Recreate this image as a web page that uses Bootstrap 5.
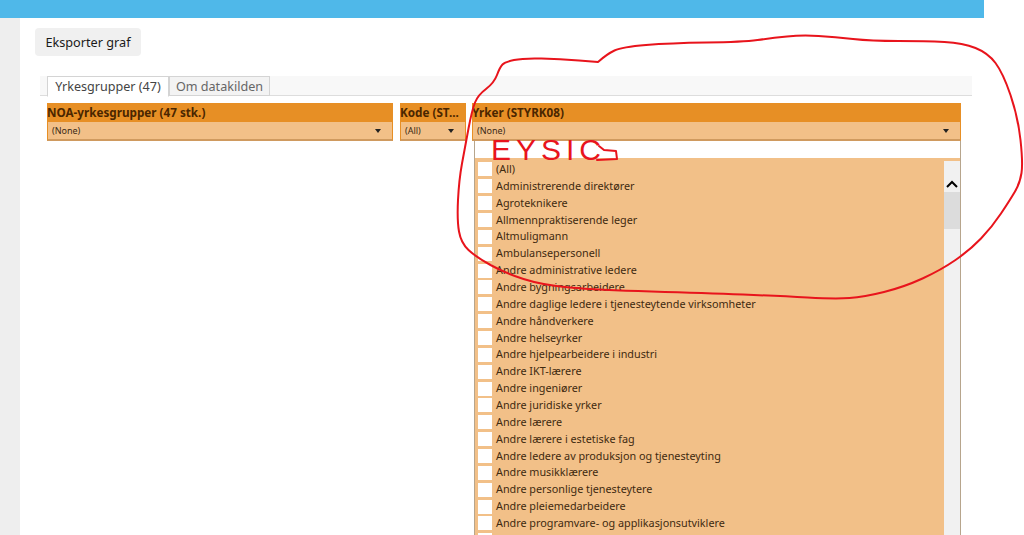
<!DOCTYPE html>
<html lang="en">
<head>
    <meta charset="UTF-8">
    <meta name="viewport" content="width=device-width, initial-scale=1.0">
    <title>Yrkesgrupper</title>
    <link href="https://cdn.jsdelivr.net/npm/bootstrap@5.3.0/dist/css/bootstrap.min.css" rel="stylesheet">
    <style>
        html, body { height: 535px; overflow: hidden; }
        body { font-family: "Noto Sans", "Open Sans", sans-serif; background: #fff; color: #222; position: relative; }
        .top-strip { height: 18px; width: 984px; background: #4fb8e9; }
        .side-band { width: 20px; background: #eee; flex: none; }
        .page-body { height: 517px; }
        .page-main { padding: 10px 0 0 15px; min-width: 0; }
        .export-btn { width: 106px; height: 28px; padding: 0; background: #f0f0f0; border: 0; border-radius: 4px; font-size: 12.7px; line-height: 28px; color: #1a1a1a; }
        .export-btn:hover { background: #e6e6e6; }
        .tab-strip { width: 932px; height: 20px; margin: 20px 0 0 5px; padding-left: 7px; background: #f8f8f8; border-bottom: 1px solid #ddd; flex-wrap: nowrap; }
        .tab-strip .nav-link { height: 20px; padding: 0; font-size: 12.6px; line-height: 19px; color: #666; background: #f3f3f3; border: 1px solid #d4d4d4; border-radius: 0; margin: 0; white-space: nowrap; }
        .tab-strip .nav-link.active { height: 21px; color: #444; background: #fff; border-color: #d4d4d4 #d4d4d4 #fff; }
        .tab-first { width: 122px; }
        .tab-second { width: 101px; margin-left: 0; }
        .slicer-row { margin: 7px 0 0 12px; }
        .slicer-one { width: 346px; margin-right: 7px; }
        .slicer-two { width: 66px; margin-right: 6px; }
        .slicer-three { width: 489px; }
        .slicer-head { height: 19px; background: #e78f25; font-size: 11.7px; line-height: 19px; font-weight: 700; color: #4a2600; white-space: nowrap; overflow: hidden; }
        .slicer-pick { height: 19px; background: #f2c088; border: 1px solid #e78f25; border-top: 0; border-bottom: 2px solid #cf9a5f; padding: 0 11px 0 4px; font-size: 9px; color: #3a2a15; }
        .slicer-pick i { width: 0; height: 0; border-left: 3px solid transparent; border-right: 3px solid transparent; border-top: 4px solid #222; }
        .pick-list { margin-left: 2px; width: 487px; height: 395px; border: 1px solid #b7a58c; border-top: 0; border-bottom: 0; overflow: hidden; }
        .pick-search { height: 17px; background: #fff; }
        .pick-body { height: 378px; background: #f2c088; padding-top: 3px; }
        .pick-rows { min-width: 0; padding-left: 3px; }
        .pick-row { height: 16.86px; font-size: 10.8px; line-height: 16.86px; color: #3f2a10; white-space: nowrap; }
        .pick-box { width: 14px; height: 14px; background: #fff; flex: none; margin-right: 4px; }
        .scroll-track { width: 16px; background: #f1f1f1; flex: none; }
        .scroll-up { height: 31px; }
        .scroll-thumb { height: 37px; background: #dcdcdc; }
        .ink-layer { position: absolute; left: 0; top: 0; pointer-events: none; }
        .ink-word { position: absolute; left: 491px; top: 140px; font-family: "Liberation Sans", sans-serif; font-size: 30px; line-height: 19px; letter-spacing: 5px; color: #e8141c; pointer-events: none; }
    </style>
</head>
<body>
    <div class="top-strip"></div>
    <div class="d-flex page-body">
        <div class="side-band"></div>
        <div class="page-main flex-grow-1">
            <button class="btn export-btn d-block" type="button">Eksporter graf</button>

            <ul class="nav tab-strip">
                <li class="nav-item"><a class="nav-link active tab-first text-center" href="#">Yrkesgrupper (47)</a></li>
                <li class="nav-item"><a class="nav-link tab-second text-center" href="#">Om datakilden</a></li>
            </ul>

            <div class="d-flex align-items-start slicer-row">
                <div class="slicer-one">
                    <div class="slicer-head">NOA-yrkesgrupper (47 stk.)</div>
                    <div class="slicer-pick d-flex align-items-center justify-content-between"><span>(None)</span><i></i></div>
                </div>
                <div class="slicer-two">
                    <div class="slicer-head">Kode (ST...</div>
                    <div class="slicer-pick d-flex align-items-center justify-content-between"><span>(All)</span><i></i></div>
                </div>
                <div class="slicer-three">
                    <div class="slicer-head">Yrker (STYRK08)</div>
                    <div class="slicer-pick d-flex align-items-center justify-content-between"><span>(None)</span><i></i></div>
                    <div class="pick-list">
                        <div class="pick-search"></div>
                        <div class="pick-body d-flex">
                            <div class="pick-rows flex-grow-1" id="pick-rows"></div>
                            <div class="scroll-track">
                                <div class="scroll-up d-flex justify-content-center align-items-end pb-1">
                                    <svg width="12" height="8" viewBox="0 0 12 8"><path d="M1 7L6 2l5 5" fill="none" stroke="#000" stroke-width="2"/></svg>
                                </div>
                                <div class="scroll-thumb"></div>
                            </div>
                        </div>
                    </div>
                </div>
            </div>
        </div>
    </div>

    <div class="ink-word">EYSIC</div>
    <svg class="ink-layer" width="1024" height="535" viewBox="0 0 1024 535" fill="none" stroke="#e8141c" stroke-width="2" stroke-linejoin="round" stroke-linecap="round">
        <path id="ink-loop"/>
        <path d="M599 146l5 4 12 1 1 8-20 1"/>
    </svg>

    <script>
        let occupations = [
            "(All)", "Administrerende direktører", "Agroteknikere", "Allmennpraktiserende leger",
            "Altmuligmann", "Ambulansepersonell", "Andre administrative ledere", "Andre bygningsarbeidere",
            "Andre daglige ledere i tjenesteytende virksomheter", "Andre håndverkere", "Andre helseyrker",
            "Andre hjelpearbeidere i industri", "Andre IKT-lærere", "Andre ingeniører", "Andre juridiske yrker",
            "Andre lærere", "Andre lærere i estetiske fag", "Andre ledere av produksjon og tjenesteyting",
            "Andre musikklærere", "Andre personlige tjenesteytere", "Andre pleiemedarbeidere",
            "Andre programvare- og applikasjonsutviklere", ""
        ];

        let pickRows = document.getElementById("pick-rows");
        occupations.forEach(name => {
            let row = document.createElement("div");
            row.className = "pick-row d-flex align-items-center";
            row.innerHTML = `<span class="pick-box"></span><span>${name}</span>`;
            pickRows.appendChild(row);
        });

        // red marker loop, smoothed through the traced points
        let pts = [[598,62],[607,54],[622,47],[670,43],[743,42],[772,38],[802,35],[835,37],[871,41],[926,41],[963,43],
            [988,53],[1003,73],[1018,117],[1023,163],[1020,183],[1010,200],[992,227],[970,250],[941,270],[904,287],
            [864,297],[835,299],[780,296],[706,293],[597,290],[542,285],[505,273],[476,257],[461,243],[457,220],
            [459,180],[465,147],[472,110],[478,95],[494,83],[500,67],[505,62],[523,58],[560,59],[598,62]];
        let d = `M${pts[0][0]} ${pts[0][1]}`;
        for (let i = 1; i < pts.length - 1; i++) {
            let mx = (pts[i][0] + pts[i + 1][0]) / 2;
            let my = (pts[i][1] + pts[i + 1][1]) / 2;
            d += `Q${pts[i][0]} ${pts[i][1]} ${mx} ${my}`;
        }
        d += `L${pts[pts.length - 1][0]} ${pts[pts.length - 1][1]}`;
        document.getElementById("ink-loop").setAttribute("d", d);
    </script>
    <script src="https://cdn.jsdelivr.net/npm/bootstrap@5.3.0/dist/js/bootstrap.bundle.min.js"></script>
</body>
</html>
